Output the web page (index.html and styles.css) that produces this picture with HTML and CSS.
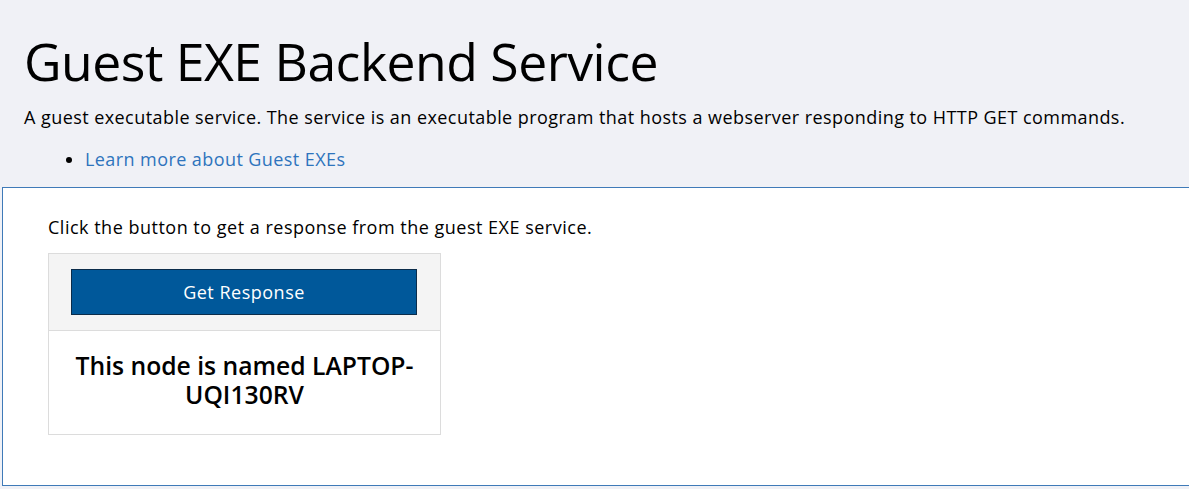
FILE: index.html
```html
<!DOCTYPE html>
<html>
<head>
<meta charset="utf-8">
<title>Guest EXE Backend Service</title>
<link rel="stylesheet" href="styles.css">
</head>
<body>
<header class="intro">
  <h1 class="title">Guest EXE Backend Service</h1>
  <p class="lead">A guest executable service. The service is an executable program that hosts a webserver responding to HTTP GET commands.</p>
  <ul class="links">
    <li><a href="#">Learn more about Guest EXEs</a></li>
  </ul>
</header>
<main class="panel">
  <p class="hint">Click the button to get a response from the guest EXE service.</p>
  <div class="card">
    <div class="card-head">
      <button class="btn" type="button">Get Response</button>
    </div>
    <div class="card-body">
      <h3 class="result">This node is named LAPTOP-UQI130RV</h3>
    </div>
  </div>
</main>
</body>
</html>
```

FILE: styles.css
```css
html, body {
  margin: 0;
  padding: 0;
}
body {
  background: #f0f1f6;
  font-family: "Open Sans", "Noto Sans", sans-serif;
  color: #000;
  overflow: hidden;
  width: 1189px;
  height: 489px;
}
.intro {
  padding: 26px 24px 0 24px;
  height: 161px;
}
.title {
  margin: 0;
  font-size: 51.7px;
  font-weight: 400;
  line-height: 70px;
  letter-spacing: -0.5px;
}
.lead {
  margin: 8px 0 0 0;
  font-size: 18px;
  letter-spacing: 0.44px;
  line-height: 26px;
}
.links {
  margin: 16px 0 0 0;
  padding-left: 61px;
  font-size: 18px;
  letter-spacing: 0.42px;
  line-height: 26px;
}
.links a {
  color: #2e74bd;
  text-decoration: none;
}
.panel {
  margin-left: 2px;
  height: 299px;
  background: #fff;
  border: 1px solid #3f7ab8;
  border-right: none;
  padding: 0 0 0 45px;
  box-sizing: border-box;
}
.hint {
  margin: 0;
  padding-top: 26px;
  font-size: 18px;
  letter-spacing: 0.5px;
  line-height: 26px;
}
.card {
  margin-top: 13px;
  width: 393px;
  border: 1px solid #dcdcdc;
  box-sizing: border-box;
  background: #fff;
}
.card-head {
  background: #f4f4f4;
  padding: 15px 23px 15px 22px;
  border-bottom: 1px solid #dcdcdc;
}
.btn {
  display: block;
  width: 100%;
  height: 46px;
  background: #00589a;
  border: 1px solid #0b2c4a;
  color: #fff;
  font-family: "Open Sans", "Noto Sans", sans-serif;
  font-size: 18px;
  letter-spacing: 0.5px;
  padding: 0;
}
.card-body {
  padding: 20px 10px 25px;
  text-align: center;
}
.result {
  margin: 0;
  font-size: 24.7px;
  font-weight: 600;
  line-height: 29px;
}
```
